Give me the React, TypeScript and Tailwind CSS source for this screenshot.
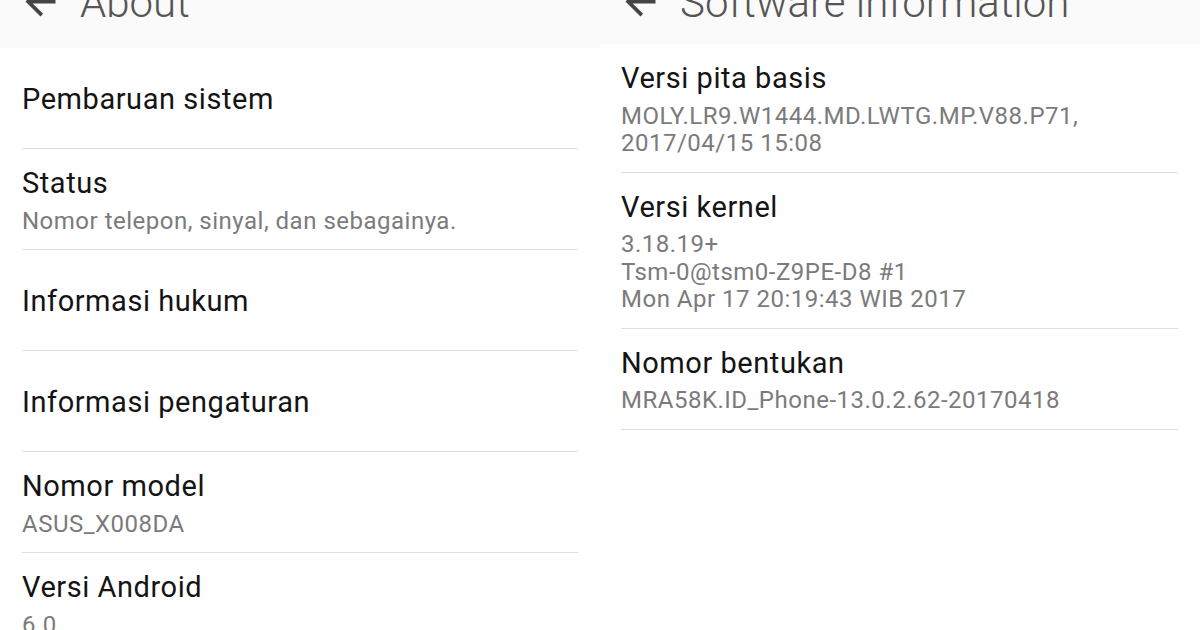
import React from "react";

const font = { fontFamily: "Roboto, 'Noto Sans', sans-serif" };

function BackArrow() {
  return (
    <svg
      viewBox="0 0 24 24"
      className="absolute left-[18px] top-[-21px] h-[45px] w-[45px]"
      fill="#444444"
    >
      <path d="M20 11H7.83l5.59-5.59L12 4l-8 8 8 8 1.41-1.41L7.83 13H20v-2z" />
    </svg>
  );
}

function Header({ title, h }: { title: string; h: string }) {
  return (
    <div className={`relative overflow-hidden bg-[#fafafa] ${h}`}>
      <BackArrow />
      <div className="mt-[-18px] pl-[80px] text-[42px] font-light leading-[42px] text-[#555555] whitespace-nowrap">
        {title}
      </div>
    </div>
  );
}

type Item = { title: string; sub?: string[] };

function Row({ item, last }: { item: Item; last?: boolean }) {
  const border = last ? "" : "border-b border-[#dedede]";
  if (!item.sub) {
    return (
      <div className={`flex h-[101px] items-center pt-[2px] ${border}`}>
        <div className="text-[29px] leading-[36px] tracking-[0.55px] text-[#141414]">
          {item.title}
        </div>
      </div>
    );
  }
  return (
    <div className={`pt-[16px] pb-[14px] ${border}`}>
      <div className="text-[29px] leading-[36px] tracking-[0.55px] text-[#141414]">
        {item.title}
      </div>
      <div className="mt-[6.5px] text-[24px] leading-[27.5px] tracking-[0.5px] text-[#7b7b7b]">
        {item.sub.map((s, i) => (
          <div key={i}>{s}</div>
        ))}
      </div>
    </div>
  );
}

const leftItems: Item[] = [
  { title: "Pembaruan sistem" },
  { title: "Status", sub: ["Nomor telepon, sinyal, dan sebagainya."] },
  { title: "Informasi hukum" },
  { title: "Informasi pengaturan" },
  { title: "Nomor model", sub: ["ASUS_X008DA"] },
  { title: "Versi Android", sub: ["6.0"] },
];

const rightItems: Item[] = [
  {
    title: "Versi pita basis",
    sub: ["MOLY.LR9.W1444.MD.LWTG.MP.V88.P71,", "2017/04/15 15:08"],
  },
  {
    title: "Versi kernel",
    sub: ["3.18.19+", "Tsm-0@tsm0-Z9PE-D8 #1", "Mon Apr 17 20:19:43 WIB 2017"],
  },
  { title: "Nomor bentukan", sub: ["MRA58K.ID_Phone-13.0.2.62-20170418"] },
];

export default function App() {
  return (
    <div className="flex h-[630px] w-[1200px] overflow-hidden bg-white" style={font}>
      <div className="w-[600px]">
        <Header title="About" h="h-[48px]" />
        <div className="pl-[22px] pr-[22px]">
          {leftItems.map((it, i) => (
            <Row key={i} item={it} last={i === leftItems.length - 1} />
          ))}
        </div>
      </div>
      <div className="w-[600px]">
        <Header title="Software information" h="h-[44px]" />
        <div className="pl-[21px] pr-[22px]">
          {rightItems.map((it, i) => (
            <Row key={i} item={it} />
          ))}
        </div>
      </div>
    </div>
  );
}
